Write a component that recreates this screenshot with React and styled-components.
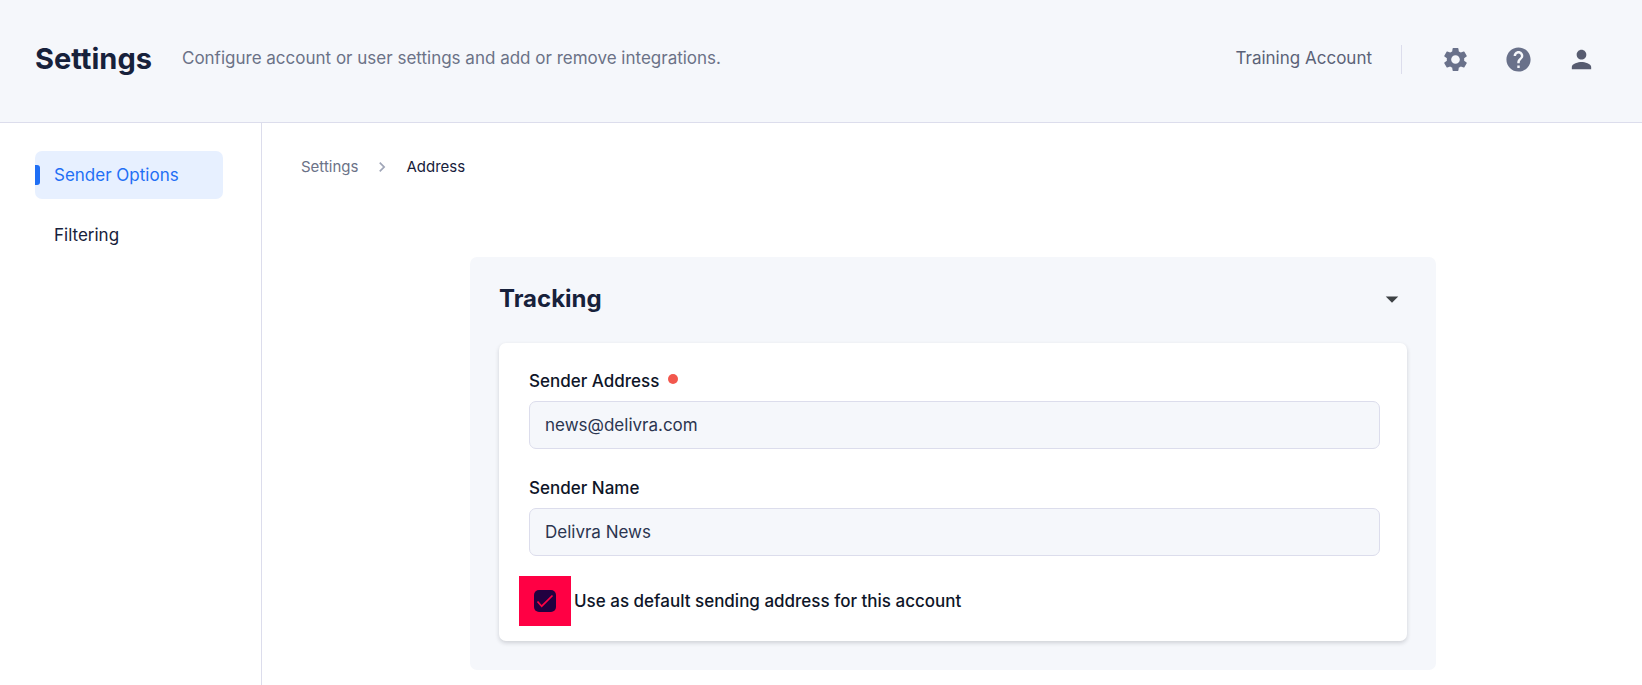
import React, { useState } from 'react';
import styled, { createGlobalStyle } from 'styled-components';
import { MdArrowDropDown, MdChevronRight, MdHelp, MdPerson, MdSettings } from 'react-icons/md';


const GlobalStyle = createGlobalStyle`
  * {
    box-sizing: border-box;
  }

  html, body, #root {
    height: 100%;
  }

  body {
    margin: 0;
    background: #fff;
    color: #17213b;
    font-family: Inter, sans-serif;
    font-size: 17px;
    line-height: 24px;
  }

  input, button {
    font: inherit;
  }
`;

const Page = styled.div`
  display: flex;
  flex-direction: column;
  min-height: 100%;
`;

const Header = styled.header`
  display: flex;
  align-items: center;
  justify-content: space-between;
  padding: 43px 46px 47px 35px;
  background: #f5f7fb;
  border-bottom: 1px solid #dcddec;
`;

const Heading = styled.div`
  display: flex;
  align-items: center;
  gap: 30px;
`;

const Title = styled.h1`
  margin: 0;
  font-size: 29px;
  font-weight: 700;
  line-height: 32px;
`;

const HeaderText = styled.p`
  margin: 0;
  padding-bottom: 2px;
  color: ${({ $strong }) => ($strong ? '#5b6277' : '#6b7287')};
`;

const Account = styled.div`
  display: flex;
  align-items: center;
  gap: 29px;
`;

const HeaderActions = styled.div`
  display: flex;
  gap: 34px;
  padding-left: 39px;
  border-left: 1px solid #dcddec;
`;

const IconButton = styled.button`
  display: flex;
  padding: 0;
  border: 0;
  background: none;
  color: ${({ $color }) => $color || '#69718a'};
  cursor: pointer;
`;

const Body = styled.div`
  display: flex;
  flex: 1;
`;

const Sidebar = styled.nav`
  display: flex;
  flex-direction: column;
  gap: 12px;
  width: 262px;
  padding: 28px 38px 28px 35px;
  border-right: 1px solid #dcddec;
`;

const NavLink = styled.a`
  display: flex;
  align-items: center;
  height: 48px;
  border-radius: 7px;
  background: ${({ $active }) => ($active ? '#e7f0ff' : 'none')};
  color: ${({ $active }) => ($active ? '#1f6ff5' : '#17213b')};
  text-decoration: none;

  &::before {
    content: '';
    width: 5px;
    height: 20px;
    margin-right: 14px;
    border-radius: 0 3px 3px 0;
    background: ${({ $active }) => ($active ? '#1f6ff5' : 'none')};
  }
`;

const Main = styled.main`
  flex: 1;
  padding: 32px 37px 15px 39px;
`;

const Breadcrumb = styled.nav`
  display: flex;
  align-items: center;
  gap: 14px;
  font-size: 15px;
  color: #a0a6b8;
`;

const Crumb = styled.a`
  color: ${({ $current }) => ($current ? '#17213b' : '#6b7287')};
  text-decoration: none;
`;

const Panel = styled.section`
  max-width: 966px;
  margin: 78px auto 0;
  padding: 26px 29px 29px;
  border-radius: 7px;
  background: #f5f7fb;
`;

const PanelHeader = styled.div`
  display: flex;
  align-items: center;
  justify-content: space-between;
  height: 32px;
  margin-bottom: 28px;
`;

const PanelTitle = styled.h2`
  margin: 0;
  font-size: 24px;
  font-weight: 700;
  line-height: 32px;
`;

const Card = styled.form`
  display: flex;
  flex-direction: column;
  padding: 26px 27px 15px 30px;
  border-radius: 7px;
  background: #fff;
  box-shadow: 0 2px 4px rgba(20, 24, 36, 0.17);
`;

const Field = styled.div`
  display: flex;
  flex-direction: column;
  gap: 8px;
  margin-bottom: 27px;
`;

const Label = styled.label`
  display: flex;
  align-items: center;
  gap: 9px;
  color: #0e1528;
  font-weight: 500;
`;

const RequiredDot = styled.span`
  width: 10px;
  height: 10px;
  margin-bottom: 4px;
  border-radius: 50%;
  background: #f2574d;
`;

const TextInput = styled.input`
  width: 100%;
  height: 48px;
  padding: 0 15px;
  border: 1px solid #dcddec;
  border-radius: 7px;
  background: #f5f7fb;
  color: #2b3550;
  outline: none;
`;

const DefaultRow = styled.div`
  display: flex;
  align-items: center;
  gap: 3px;
  margin: -7px 0 0 -10px;
`;

const Highlight = styled.span`
  display: flex;
  align-items: center;
  justify-content: center;
  width: 52px;
  height: 50px;
  background: #ff0044;
`;

const CheckWrap = styled.span`
  position: relative;
  display: flex;
`;

const Checkbox = styled.input`
  appearance: none;
  width: 22px;
  height: 22px;
  margin: 0;
  border-radius: 5px;
  background: #220040;
`;

const Tick = styled.svg`
  position: absolute;
  inset: 0;
  fill: none;
  stroke: #ff0044;
  stroke-width: 1.7;
  pointer-events: none;
`;

function Toggle({ id, checked, onChange }) {
  return (
    <Highlight>
      <CheckWrap>
        <Checkbox id={id} type="checkbox" checked={checked} onChange={onChange} />
        {checked && (
          <Tick width="22" height="22" viewBox="0 0 22 22">
            <path d="M3.5 11.5L7.7 16.2L18.5 5.5" />
          </Tick>
        )}
      </CheckWrap>
    </Highlight>
  );
}

export default function App() {
  const [address, setAddress] = useState('news@delivra.com');
  const [name, setName] = useState('Delivra News');
  const [isDefault, setIsDefault] = useState(true);
  const [open, setOpen] = useState(true);

  return (
    <Page>
      <GlobalStyle />
      <Header>
        <Heading>
          <Title>Settings</Title>
          <HeaderText>Configure account or user settings and add or remove integrations.</HeaderText>
        </Heading>
        <Account>
          <HeaderText $strong>Training Account</HeaderText>
          <HeaderActions>
            <IconButton aria-label="Settings"><MdSettings size={29} /></IconButton>
            <IconButton aria-label="Help"><MdHelp size={29} /></IconButton>
            <IconButton aria-label="Profile" $color="#575c70"><MdPerson size={29} /></IconButton>
          </HeaderActions>
        </Account>
      </Header>
      <Body>
        <Sidebar>
          <NavLink href="#sender" $active>Sender Options</NavLink>
          <NavLink href="#filtering">Filtering</NavLink>
        </Sidebar>
        <Main>
          <Breadcrumb aria-label="Breadcrumb">
            <Crumb href="#settings">Settings</Crumb>
            <MdChevronRight size={20} />
            <Crumb href="#address" $current>Address</Crumb>
          </Breadcrumb>
          <Panel>
            <PanelHeader>
              <PanelTitle>Tracking</PanelTitle>
              <IconButton aria-label="Toggle tracking" $color="#3d4144" onClick={() => setOpen(!open)}>
                <MdArrowDropDown size={30} />
              </IconButton>
            </PanelHeader>
            {open && (
              <Card>
                <Field>
                  <Label htmlFor="address">Sender Address<RequiredDot /></Label>
                  <TextInput id="address" value={address} onChange={e => setAddress(e.target.value)} />
                </Field>
                <Field>
                  <Label htmlFor="name">Sender Name</Label>
                  <TextInput id="name" value={name} onChange={e => setName(e.target.value)} />
                </Field>
                <DefaultRow>
                  <Toggle id="default" checked={isDefault} onChange={e => setIsDefault(e.target.checked)} />
                  <Label htmlFor="default">Use as default sending address for this account</Label>
                </DefaultRow>
              </Card>
            )}
          </Panel>
        </Main>
      </Body>
    </Page>
  );
}
